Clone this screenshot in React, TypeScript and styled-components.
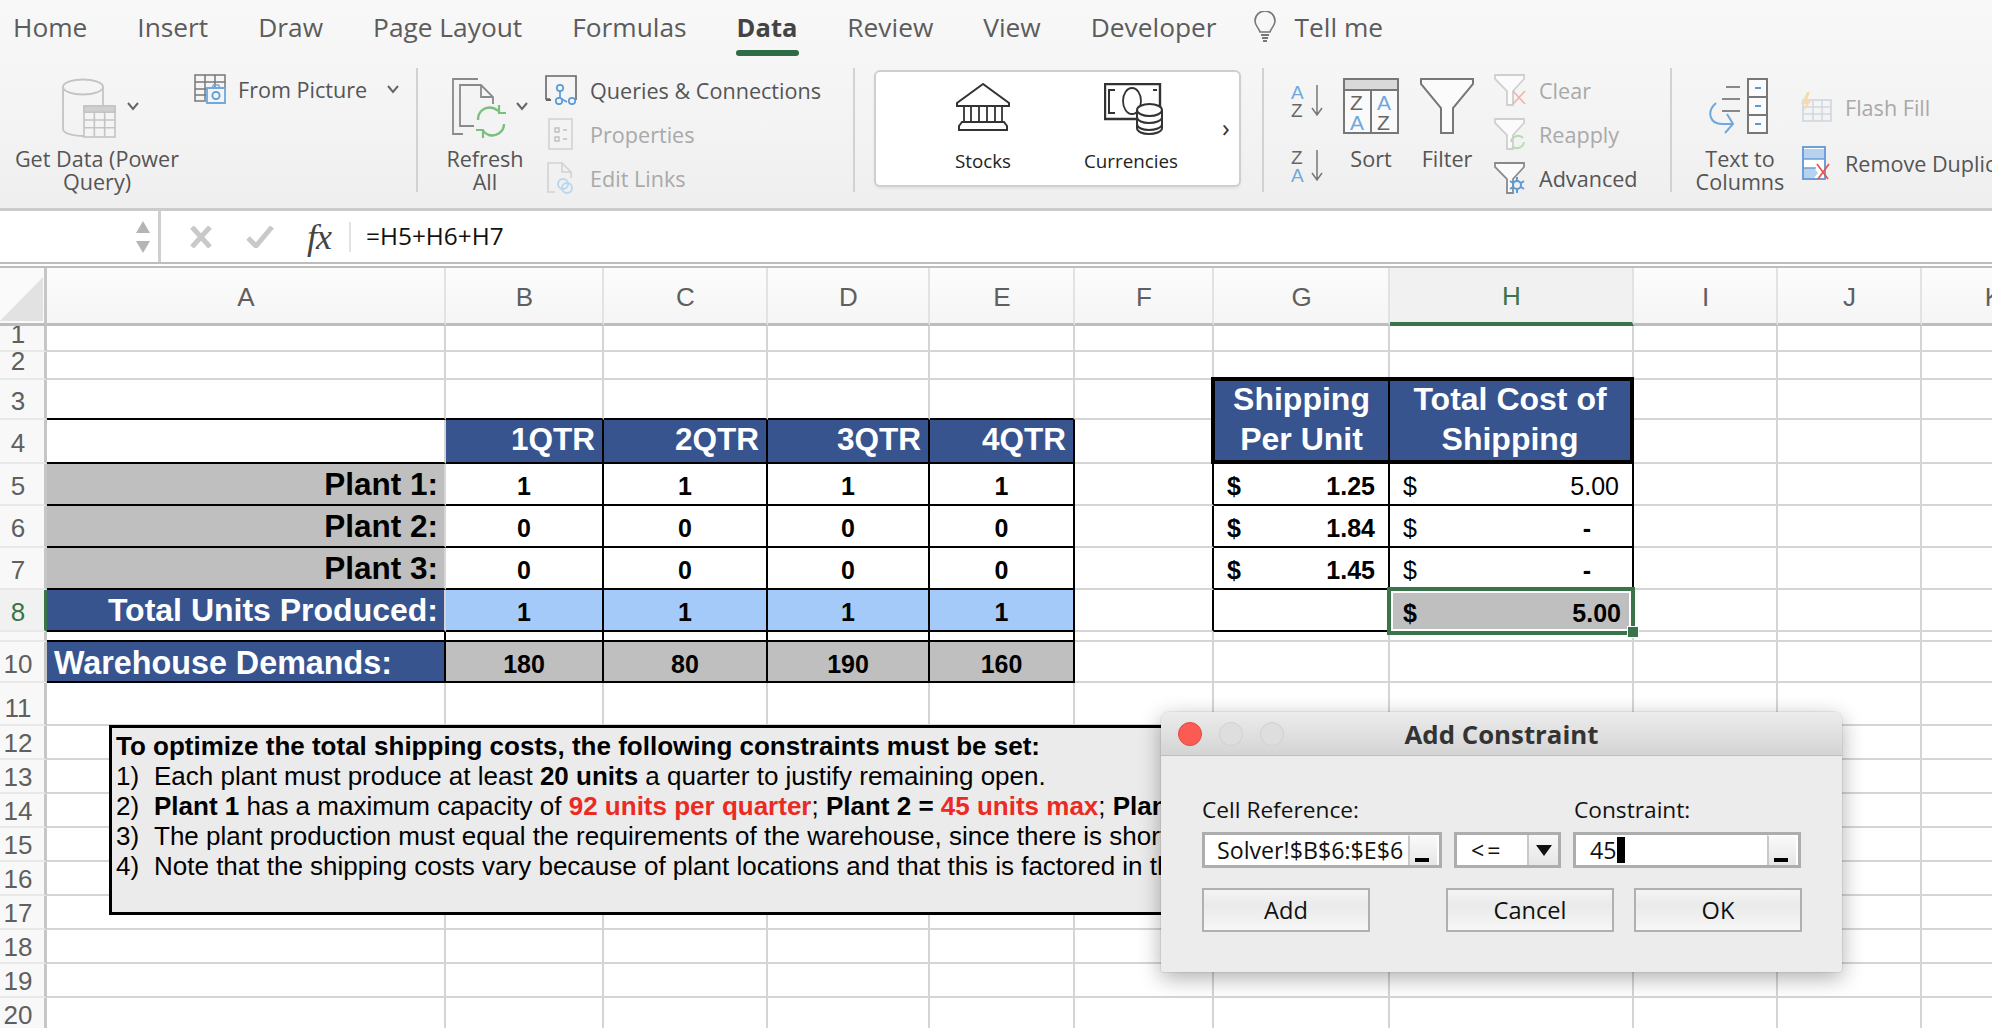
import React from 'react';
import styled, { createGlobalStyle } from 'styled-components';

const GlobalStyle = createGlobalStyle`
  html, body { margin: 0; padding: 0; background: #fff; overflow: hidden; }
  body { width: 1992px; height: 1028px; font-family: "Liberation Sans", Arial, sans-serif; }
  * { box-sizing: border-box; }
`;

const Page = styled.div`width: 1992px; height: 1028px; overflow: hidden; display: flex; flex-direction: column;`;

/* ---------- ribbon ---------- */
const Ribbon = styled.header`
  height: 211px; flex: none; border-bottom: 3px solid #cbcbcb;
  background: linear-gradient(#f8f8f8, #f5f5f5 40%, #efefef);
  font-family: "Open Sans", sans-serif; color: #555; overflow: hidden;
`;
const Tabs = styled.nav`height: 62px; display: flex; gap: 50px; padding: 9px 0 0 13px; align-items: flex-start;`;
const Tab = styled.div<{ $active?: boolean }>`
  font-size: ${p => (p.$active ? 25.5 : 26.3)}px; line-height: 36px; white-space: nowrap; position: relative;
  font-weight: ${p => (p.$active ? 700 : 400)};
  color: ${p => (p.$active ? '#444' : '#5c5c5c')};
  ${p => p.$active && `&::after { content: ''; position: absolute; left: -1px; right: -2px; top: 41px; height: 6px; border-radius: 3px; background: #2f6b45; }`}
`;
const TellMe = styled(Tab)`display: flex; align-items: center; gap: 19px; margin-left: -13px;`;
const Body = styled.div`display: flex; height: 146px;`;
const Group = styled.section<{ $w: number }>`width: ${p => p.$w}px; flex: none; display: flex; align-items: flex-start;`;
const Sep = styled.div`width: 2px; flex: none; height: 124px; margin-top: 6px; background: #d2d2d2;`;
const Big = styled.div<{ $w: number; $ml?: number }>`
  width: ${p => p.$w}px; margin-left: ${p => p.$ml ?? 0}px; flex: none;
  display: flex; flex-direction: column; padding-top: 16px;
`;
const BigIcon = styled.div<{ $pl?: number; $center?: boolean }>`
  height: 69px; display: flex; align-items: flex-start; position: relative;
  justify-content: ${p => (p.$center ? 'center' : 'flex-start')};
  padding-left: ${p => p.$pl ?? 0}px;
`;
const BigLabel = styled.div`
  font-size: 21.6px; line-height: 23px; text-align: center; color: #555; white-space: nowrap;
`;
const Commands = styled.div<{ $ml?: number; $mt?: number; $row?: number }>`
  margin-left: ${p => p.$ml ?? 0}px; margin-top: ${p => p.$mt ?? 6}px; flex: none;
  display: grid; grid-auto-rows: ${p => p.$row ?? 44}px;
`;
const Command = styled.div<{ $gap?: number; $off?: boolean }>`
  display: flex; align-items: center; gap: ${p => p.$gap ?? 13}px; white-space: nowrap;
  font-size: 21.6px; color: ${p => (p.$off ? '#a9a9a9' : '#555')};
`;
const IconCell = styled.span`width: 32px; flex: none; display: flex; justify-content: center;`;
const Chevron = styled.svg`display: block; flex: none;`;
const Down = ({ x = 0 }: { x?: number }) => (
  <Chevron width="12" height="9" viewBox="0 0 12 9" style={x ? { marginLeft: x } : undefined}>
    <path d="M1 1l5 6 5-6" fill="none" stroke="#666" strokeWidth="2" />
  </Chevron>
);
const BigDown = styled.span<{ $left: number }>`position: absolute; left: ${p => p.$left}px; top: 24px;`;

const Gallery = styled.div`
  margin: 8px 0 0 19px; width: 367px; height: 117px; background: #fff; flex: none;
  border: 2px solid #cfcfcf; border-radius: 6px; display: flex; padding-left: 33px; position: relative;
  box-shadow: 0 2px 3px rgba(0,0,0,.05);
`;
const GalleryItem = styled.div`
  width: 148px; display: flex; flex-direction: column; align-items: center; color: #222;
  font-size: 18.8px; padding-top: 11px;
`;
const GalleryIcon = styled.div<{ $ml?: number }>`
  height: 65px; display: flex; align-items: flex-start; margin-left: ${p => p.$ml ?? 0}px;
`;
const GalleryNext = styled.div`
  align-self: center; margin-left: 17px; font-size: 26px; line-height: 26px; color: #333; margin-top: -3px;
`;
const SortStack = styled.div`
  margin: 22px 0 0 27px; width: 33px; height: 98px; display: flex; flex-direction: column; justify-content: space-between; flex: none;
`;

/* ---------- formula bar ---------- */
const FormulaBar = styled.div`
  height: 57px; flex: none; display: flex; align-items: stretch; background: #fff;
  border-bottom: 6px double #bdbdbd;
`;
const NameBox = styled.div`
  width: 161px; flex: none; border-right: 3px solid #cfcfcf; display: flex; flex-direction: column;
  align-items: flex-end; justify-content: center; gap: 8px; padding-right: 8px;
`;
const FxZone = styled.div`
  width: 190px; flex: none; display: flex; align-items: center; padding-left: 28px; position: relative;
  &::after { content: ''; position: absolute; right: 0; top: 11px; height: 30px; width: 2px; background: #e3e3e3; }
`;
const FxGap = styled.span`width: 33px; flex: none;`;
const Fx = styled.span`
  font-family: "Liberation Serif", serif; font-style: italic; font-size: 36px; color: #444; margin-left: 33px;
  letter-spacing: -1px; line-height: 30px;
`;
const Formula = styled.div`
  font-family: "Open Sans", sans-serif; font-size: 24.4px; color: #111; padding: 0 0 2px 15px;
  display: flex; align-items: center; white-space: nowrap;
`;

/* ---------- sheet ---------- */
const Sheet = styled.main`flex: 1; position: relative; overflow: hidden;`;
const Grid = styled.div<{ $cols: string; $rows: string }>`
  display: grid; grid-template-columns: ${p => p.$cols}; grid-template-rows: ${p => p.$rows}; width: 2066px;
`;
const Corner = styled.div`
  background: #fafafa; border-right: 3px solid #c6c6c6; border-bottom: 3px solid #bdbdbd; padding: 9px 0 0 0;
  display: flex; align-items: flex-start; overflow: hidden;
`;
const ColHead = styled.div<{ $sel?: boolean }>`
  display: flex; align-items: center; justify-content: center; font-size: 26px; padding: 3px 0 0 1px;
  border-right: 2px solid #e2e2e2; border-bottom: ${p => (p.$sel ? '4px solid #39744a' : '3px solid #bdbdbd')};
  color: ${p => (p.$sel ? '#39744a' : '#5f5f5f')};
  background: ${p => (p.$sel ? '#f1f1f1' : 'linear-gradient(#fcfcfc, #f5f5f5)')};
`;
const RowHead = styled.div<{ $sel?: boolean; $pt: number; $pb: number }>`
  display: flex; align-items: center; justify-content: center; overflow: hidden; font-size: 26px; line-height: 24px;
  padding-right: 8px; padding-top: ${p => p.$pt}px; padding-bottom: ${p => p.$pb}px;
  border-bottom: 2px solid #e8e8e8;
  border-right: 3px solid ${p => (p.$sel ? '#39744a' : '#c6c6c6')};
  color: ${p => (p.$sel ? '#39744a' : '#5f5f5f')};
  background: ${p => (p.$sel ? '#f1f1f1' : '#f8f8f8')};
`;
const Cell = styled.div<{
  $fill?: string; $ink?: string; $align?: string; $size?: number; $weight?: number;
  $r?: boolean; $b?: boolean; $pl?: number; $pr?: number; $pt?: number; $pb?: number;
}>`
  display: flex; align-items: center; overflow: hidden; white-space: nowrap; min-width: 0;
  justify-content: ${p => p.$align ?? 'center'};
  background: ${p => p.$fill ?? '#fff'}; color: ${p => p.$ink ?? '#000'};
  font-size: ${p => p.$size ?? 25}px; font-weight: ${p => p.$weight ?? 700};
  padding: ${p => p.$pt ?? 5}px ${p => p.$pr ?? 0}px ${p => p.$pb ?? 0}px ${p => p.$pl ?? 0}px;
  border-right: 2px solid ${p => (p.$r ? '#000' : '#d5d5d5')};
  border-bottom: 2px solid ${p => (p.$b ? '#000' : '#d5d5d5')};
`;
const HeaderCell = styled.div<{ $first?: boolean }>`
  grid-row: span 2; margin-top: -3px; z-index: 1;
  margin-left: ${p => (p.$first ? -3 : 0)}px;
  background: #37548f; color: #fff; font-weight: 700; font-size: 32px; line-height: 40px; text-align: center;
  border: 4px solid #000; border-left-width: ${p => (p.$first ? 4 : 0)}px; border-right-width: ${p => (p.$first ? 2 : 4)}px;
  display: flex; align-items: center; justify-content: center; white-space: pre-line; padding-bottom: 4px;
`;
const Selected = styled(Cell)`
  position: relative; z-index: 2; overflow: visible;
  outline: 4px solid #39744a; outline-offset: 0; box-shadow: inset 0 0 0 2px #fff;
  border: 0; margin: 1px 3px 1px 1px; padding: 4px 10px 0 12px;
`;
const Handle = styled.span`
  position: absolute; right: -7px; bottom: -6px; width: 10px; height: 10px; background: #39744a;
  outline: 1px solid #fff;
`;
const Dash = styled.span`margin-right: 28px;`;

const NoteBox = styled.aside`
  position: absolute; left: 109px; top: 457px; width: 1150px; height: 190px;
  background: #ebebeb; border: 3px solid #000; padding: 3px 0 0 4px; overflow: hidden; z-index: 3;
  font-size: 26px; line-height: 30px; color: #000; white-space: nowrap;
`;
const NoteLine = styled.div`display: flex;`;
const NoteNum = styled.span`width: 38px; flex: none;`;
const Hot = styled.b`color: #ec2a24;`;

/* ---------- dialog ---------- */
const Dialog = styled.section`
  position: absolute; left: 1161px; top: 444px; width: 681px; height: 260px; z-index: 5;
  background: #ececec; border-radius: 8px 8px 3px 3px;
  box-shadow: 0 6px 22px rgba(0,0,0,.32), 0 0 0 1px rgba(0,0,0,.06);
  font-family: "Open Sans", sans-serif; color: #111;
`;
const TitleBar = styled.div`
  height: 44px; display: flex; align-items: center; position: relative; padding-left: 17px; gap: 17px;
  background: linear-gradient(#ececec, #d4d4d4); border-bottom: 1px solid #bdbdbd; border-radius: 8px 8px 0 0;
`;
const Light = styled.span<{ $red?: boolean }>`
  width: 24px; height: 24px; border-radius: 50%; flex: none;
  background: ${p => (p.$red ? '#fc5b53' : '#dedede')};
  border: 1px solid ${p => (p.$red ? '#df4a43' : '#d0d0d0')};
`;
const Title = styled.h2`
  position: absolute; left: 0; right: 0; margin: 0; text-align: center; font-size: 25.8px; line-height: 30px;
  font-weight: 700; font-family: "Open Sans", sans-serif; color: #333;
`;
const DialogBody = styled.div`padding: 40px 0 0 41px;`;
const LabelRow = styled.div`display: flex; font-size: 22.7px; line-height: 28px; height: 36px;`;
const LabelA = styled.span`width: 372px;`;
const InputRow = styled.div`display: flex; height: 36px; gap: 12px;`;
const Field = styled.div<{ $w: number }>`
  width: ${p => p.$w}px; border: 3px solid #adadad; background: #fff; display: flex; align-items: center;
  font-size: 23.2px; line-height: 30px; flex: none; padding-left: 12px; position: relative; white-space: nowrap;
`;
const Relation = styled.span`letter-spacing: 3px; padding-left: 2px;`;
const Value = styled.span`padding-left: 2px;`;
const Caret = styled.span`width: 8px; height: 26px; background: #000; flex: none;`;
const RefBtn = styled.span`
  position: absolute; right: 0; top: 0; bottom: 0; width: 31px; border-left: 2px solid #c9c9c9; border-right: 2px solid #fff;
  border-top: 1px solid #fff; background: linear-gradient(#fafafa, #e6e6e6);
  &::after { content: ''; position: absolute; left: 5px; bottom: 3px; width: 14px; height: 4px; background: #000; }
`;
const DropBtn = styled.span`
  position: absolute; right: 0; top: 0; bottom: 0; width: 31px; border-left: 2px solid #c9c9c9;
  background: linear-gradient(#f8f8f8, #e6e6e6);
  display: flex; align-items: center; justify-content: center;
  &::after { content: ''; border: 8px solid transparent; border-top: 11px solid #111; border-bottom: 0; }
`;
const ButtonRow = styled.div`display: flex; margin-top: 20px;`;
const DlgButton = styled.button<{ $ml?: number }>`
  width: 168px; height: 44px; flex: none; margin-left: ${p => p.$ml ?? 0}px; padding: 0;
  border: 2px solid #b0b0b0; background: linear-gradient(#f4f4f4, #eaeaea 40%, #f6f6f6);
  font: 400 23.6px "Open Sans", sans-serif; color: #111;
`;

/* ---------- icons ---------- */
const Bulb = () => (
  <svg width="22" height="32" viewBox="0 0 22 32">
    <path d="M6 21c-1-4-5-6-5-11a10 10 0 0 1 20 0c0 5-4 7-5 11z" fill="none" stroke="#777" strokeWidth="1.6" />
    <path d="M7 24h8M8 27h6M9 30h4" stroke="#777" strokeWidth="2" />
  </svg>
);
const TableMini = ({ x, y, s, c = '#c4c4c4' }: { x: number; y: number; s: number; c?: string }) => (
  <g stroke={c} strokeWidth="1.6" fill="#f4f4f4">
    <rect x={x} y={y} width={s} height={s} />
    <path d={`M${x} ${y + s * .2}h${s}M${x} ${y + s * .45}h${s}M${x} ${y + s * .7}h${s}M${x + s / 3} ${y + s * .2}v${s * .8}M${x + s * 2 / 3} ${y + s * .2}v${s * .8}`} fill="none" />
    <rect x={x} y={y} width={s} height={s * .2} fill="#cfcfcf" />
  </g>
);
const GetData = () => (
  <svg width="54" height="60" viewBox="0 0 54 60">
    <path d="M1 9v42c0 4 9 7 21 7" fill="none" stroke="#c4c4c4" strokeWidth="1.8" />
    <path d="M41 9v18" stroke="#c4c4c4" strokeWidth="1.8" />
    <ellipse cx="21" cy="9" rx="20" ry="7.5" fill="none" stroke="#c4c4c4" strokeWidth="1.8" />
    <TableMini x={22} y={28} s={31} />
  </svg>
);
const FromPic = () => (
  <svg width="32" height="30" viewBox="0 0 32 30">
    <path d="M12 27H1V1h30v14M1 8h30M1 15h19M1 21h11M11 1v25M21 1v13" fill="none" stroke="#777" strokeWidth="1.5" />
    <path d="M13 14h18v15H13z" fill="#f4f4f4" stroke="#6fa8dc" strokeWidth="1.8" />
    <circle cx="22" cy="21.5" r="3.6" fill="none" stroke="#5b9bd5" strokeWidth="1.8" />
    <path d="M18 14l1.5-3h5l1.5 3" fill="none" stroke="#6fa8dc" strokeWidth="1.5" />
  </svg>
);
const Refresh = () => (
  <svg width="56" height="60" viewBox="0 0 56 60">
    <path d="M26 1H1v55h10" fill="none" stroke="#8a8a8a" strokeWidth="1.8" />
    <path d="M24 48H8V7h21l12 12v7M29 7v12h12" fill="none" stroke="#8a8a8a" strokeWidth="1.8" />
    <rect x="22" y="27" width="34" height="33" fill="#f3f3f3" />
    <path d="M26 42c0-9 7-14 15-12 2 .5 4 2 5 3M52 46c0 8-8 13-15 11-3-1-5-3-6-4" fill="none" stroke="#79c07f" strokeWidth="2.4" />
    <path d="M47 27v8h7M31 60v-8h-7" fill="none" stroke="#79c07f" strokeWidth="2.2" />
  </svg>
);
const Queries = () => (
  <svg width="32" height="30" viewBox="0 0 32 30">
    <path d="M5 24H1V1h30v24" fill="none" stroke="#666" strokeWidth="1.6" />
    <path d="M1 25h5" stroke="#666" strokeWidth="2" />
    <g fill="#f4f4f4" stroke="#5b9bd5" strokeWidth="1.7">
      <path d="M15 15v8l7 4" fill="none" /><circle cx="15" cy="13" r="3.2" /><circle cx="14" cy="26" r="3.2" /><circle cx="27" cy="26" r="3.2" />
    </g>
  </svg>
);
const Props = () => (
  <svg width="26" height="32" viewBox="0 0 26 32">
    <rect x="1" y="1" width="23" height="30" fill="none" stroke="#d4d4d4" strokeWidth="1.7" />
    <path d="M7 10h4v4H7zM7 19h4v4H7zM15 12h4M15 21h4" fill="none" stroke="#c0c0c0" strokeWidth="1.4" />
  </svg>
);
const EditLinks = () => (
  <svg width="28" height="32" viewBox="0 0 28 32">
    <path d="M8 30H1V1h14l9 9v6M15 1v9h9" fill="none" stroke="#d2d2d2" strokeWidth="1.6" />
    <circle cx="16" cy="22" r="5" fill="none" stroke="#b9d7ef" strokeWidth="2" />
    <circle cx="20" cy="26" r="5" fill="none" stroke="#b9d7ef" strokeWidth="2" />
  </svg>
);
const Stocks = () => (
  <svg width="56" height="48" viewBox="0 0 56 48">
    <path d="M28 1L2 20v3h52v-3z" fill="none" stroke="#333" strokeWidth="2" />
    <path d="M9 23v16M16 23v16M24 23v16M32 23v16M40 23v16M47 23v16" stroke="#333" strokeWidth="1.8" />
    <path d="M7 39h42l3 4v4H4v-4z" fill="none" stroke="#333" strokeWidth="2" />
  </svg>
);
const Currencies = () => (
  <svg width="60" height="52" viewBox="0 0 60 52">
    <path d="M1 1h55v35H1z" fill="none" stroke="#333" strokeWidth="2.4" />
    <path d="M11 7H5v23h6M49 7h4" fill="none" stroke="#333" strokeWidth="2" />
    <ellipse cx="28" cy="18" rx="9" ry="13" fill="none" stroke="#333" strokeWidth="1.8" />
    <path d="M33 27v18c0 4 6 6 12 6s13-2 13-6V27" fill="#fff" stroke="#333" strokeWidth="2" />
    <ellipse cx="45.5" cy="27" rx="12.5" ry="6" fill="#fff" stroke="#333" strokeWidth="2" />
    <path d="M33 34c0 4 6 6 12 6s13-2 13-6M33 41c0 4 6 6 12 6s13-2 13-6" fill="none" stroke="#333" strokeWidth="2" />
  </svg>
);
const AZ = ({ flip }: { flip?: boolean }) => (
  <svg width="33" height="33" viewBox="0 0 33 33" fontFamily="Liberation Sans, sans-serif" fontSize="19">
    <text x="0" y="15" fill={flip ? '#666' : '#6fa8dc'}>{flip ? 'Z' : 'A'}</text>
    <text x="0" y="33" fill={flip ? '#6fa8dc' : '#666'}>{flip ? 'A' : 'Z'}</text>
    <path d="M26 1v30M21 24l5 7 5-7" fill="none" stroke="#777" strokeWidth="1.5" />
  </svg>
);
const SortIcon = () => (
  <svg width="56" height="56" viewBox="0 0 56 56" fontFamily="Liberation Sans, sans-serif" fontSize="21">
    <rect x="1" y="1" width="54" height="54" fill="#fafafa" stroke="#777" strokeWidth="2" />
    <rect x="1" y="1" width="54" height="11" fill="#d9d9d9" stroke="#777" strokeWidth="2" />
    <path d="M28 12v43" stroke="#777" strokeWidth="2" />
    <text x="7" y="32" fill="#666">Z</text><text x="7" y="52" fill="#6fa8dc">A</text>
    <text x="34" y="32" fill="#6fa8dc">A</text><text x="34" y="52" fill="#666">Z</text>
  </svg>
);
const FilterIcon = () => (
  <svg width="54" height="56" viewBox="0 0 54 56">
    <path d="M1 1h52v5L33 30v25H21V30L1 6z" fill="#fbfbfb" stroke="#777" strokeWidth="2" />
  </svg>
);
const FilterSmall = ({ mark, c = '#cfcfcf' }: { mark: 'x' | 'r' | 'g'; c?: string }) => (
  <svg width="33" height="32" viewBox="0 0 33 32">
    <path d="M1 1h29v4L19 17v14h-6V17L1 5z" fill="#fbfbfb" stroke={c} strokeWidth="1.8" />
    {mark === 'x' && <path d="M19 17l12 13M31 17L19 30" stroke="#f0b4b0" strokeWidth="1.7" />}
    {mark === 'r' && <path d="M17 24a7 7 0 0 1 12-4M30 24a7 7 0 0 1-12 4" fill="none" stroke="#b5dcb8" strokeWidth="2" />}
    {mark === 'g' && <g fill="none" stroke="#5b9bd5" strokeWidth="2"><circle cx="23" cy="23" r="4" /><path d="M23 15v4M23 27v4M16 19l3 2M27 25l3 2M16 27l3-2M27 21l3-2" /></g>}
  </svg>
);
const TextCols = () => (
  <svg width="60" height="56" viewBox="0 0 60 56">
    <path d="M18 9h14M14 21h18M14 33h18" stroke="#888" strokeWidth="2" />
    <rect x="40" y="1" width="19" height="54" fill="#fbfbfb" stroke="#777" strokeWidth="2" />
    <path d="M40 19h19M40 37h19" stroke="#777" strokeWidth="2" />
    <path d="M47 10h6M47 28h6M47 46h6" stroke="#5b9bd5" strokeWidth="2" />
    <path d="M8 25C-2 34 2 46 14 46h10M19 36l6 10-8 9" fill="none" stroke="#6fa8dc" strokeWidth="2" />
  </svg>
);
const FlashFill = () => (
  <svg width="32" height="30" viewBox="0 0 32 30">
    <rect x="3" y="8" width="28" height="21" fill="none" stroke="#cfd7de" strokeWidth="1.6" />
    <path d="M3 15h28M3 22h28M13 8v21M22 8v21" stroke="#cfd7de" strokeWidth="1.5" />
    <path d="M7 0L1 12h5l-3 8 9-12H7l3-8z" fill="#f4dcb2" />
  </svg>
);
const RemoveDup = () => (
  <svg width="28" height="34" viewBox="0 0 28 34">
    <rect x="1" y="1" width="22" height="32" fill="#fff" stroke="#6f9fd8" strokeWidth="2" />
    <rect x="2" y="3" width="20" height="10" fill="#b6d2ef" />
    <path d="M2 22h10l4 5-4 5H2z" fill="#b6d2ef" />
    <path d="M1 13h22M1 22h13" stroke="#6f9fd8" strokeWidth="1.6" />
    <path d="M15 18l11 15M27 18L16 33" stroke="#e4554c" strokeWidth="1.7" />
  </svg>
);
const X = () => (
  <svg width="24" height="22" viewBox="0 0 24 22"><path d="M3 1l18 20M21 1L3 21" stroke="#c9c9c9" strokeWidth="5" /></svg>
);
const Check = () => (
  <svg width="28" height="22" viewBox="0 0 28 22"><path d="M2 12l8 8L26 1" fill="none" stroke="#c9c9c9" strokeWidth="5" /></svg>
);
const Tri = ({ up }: { up?: boolean }) => (
  <svg width="14" height="12" viewBox="0 0 14 12"><path d={up ? 'M7 0l7 12H0z' : 'M0 0h14L7 12z'} fill="#b5b5b5" /></svg>
);
const CornerTri = () => (
  <svg width="43" height="44" viewBox="0 0 43 44"><path d="M43 0v44H0z" fill="#e2e2e2" /></svg>
);

/* ---------- data ---------- */
const columns = [
  ['A', 399], ['B', 158], ['C', 164], ['D', 162], ['E', 145], ['F', 139], ['G', 176], ['H', 244], ['I', 144], ['J', 144], ['K', 144],
] as const;
const rowHeights: Record<number, number> = {
  1: 26, 2: 28, 3: 40, 4: 44, 5: 42, 6: 42, 7: 42, 8: 42, 9: 10, 10: 41, 11: 43,
  12: 34, 13: 34, 14: 34, 15: 34, 16: 34, 17: 34, 18: 34, 19: 34, 20: 34, 21: 34,
};
const rows = Object.keys(rowHeights).map(Number);
const headTop = (r: number) => (r < 3 ? 0 : r === 10 ? 5 : r === 11 ? 8 : r >= 12 ? 1 : 3);
const navy = '#37548f', grey = '#bfbfbf', sky = '#a3caf8';

type Spec = React.ComponentProps<typeof Cell> & { text?: React.ReactNode };
const spec: Record<string, Spec> = {};
const put = (k: string, s: Spec) => { spec[k] = { ...spec[k], ...s }; };

'ABCDE'.split('').forEach(c => { put(`${c}3`, { $b: true }); put(`${c}4`, { $b: true }); put(`${c}9`, { $b: true }); put(`${c}10`, { $b: true }); put(`${c}8`, { $b: true }); });
put('A9', { $r: true }); put('A10', { $r: true });
const qtr: Record<string, string> = { B: '1QTR', C: '2QTR', D: '3QTR', E: '4QTR' };
const demand: Record<string, string> = { B: '180', C: '80', D: '190', E: '160' };
'BCDE'.split('').forEach(c => {
  put(`${c}4`, { $fill: navy, $ink: '#fff', text: qtr[c], $align: 'flex-end', $pr: 7, $size: 31.5, $pt: 0, $pb: 3, $r: true });
  put(`${c}5`, { text: '1', $r: true, $b: true });
  put(`${c}6`, { text: '0', $r: true, $b: true });
  put(`${c}7`, { text: '0', $r: true, $b: true });
  put(`${c}8`, { text: '1', $fill: sky, $r: true });
  put(`${c}9`, { $r: true });
  put(`${c}10`, { text: demand[c], $fill: grey, $r: true });
});
[5, 6, 7].forEach(n => put(`A${n}`, { text: `Plant ${n - 4}:`, $fill: grey, $align: 'flex-end', $pr: 6, $size: 31.5, $pt: 0, $b: true }));
put('A8', { text: 'Total Units Produced:', $fill: navy, $ink: '#fff', $align: 'flex-end', $pr: 6, $size: 32, $pt: 0 });
put('A10', { text: 'Warehouse Demands:', $fill: navy, $ink: '#fff', $align: 'flex-start', $pl: 7, $size: 32.3, $pt: 3 });
[5, 6, 7, 8].forEach(n => {
  put(`F${n}`, { $r: true });
  put(`G${n}`, { $r: true, $b: true, $align: 'space-between', $pl: 13, $pr: 13 });
});
put('G5', { text: <><span>$</span><span>1.25</span></> });
put('G6', { text: <><span>$</span><span>1.84</span></> });
put('G7', { text: <><span>$</span><span>1.45</span></> });
const hCell: Spec = { $r: true, $b: true, $align: 'space-between', $pl: 13, $pr: 13, $weight: 400 };
put('H5', { ...hCell, text: <><span>$</span><span>5.00</span></> });
put('H6', { ...hCell, text: <><span>$</span><Dash><b>-</b></Dash></> });
put('H7', { ...hCell, text: <><span>$</span><Dash><b>-</b></Dash></> });

export default function App() {
  const cols = `47px ${columns.map(c => `${c[1]}px`).join(' ')}`;
  const rowT = `58px ${rows.map(r => `${rowHeights[r]}px`).join(' ')}`;
  return (
    <Page>
      <GlobalStyle />
      <Ribbon>
        <Tabs>
          {['Home', 'Insert', 'Draw', 'Page Layout', 'Formulas'].map(t => <Tab key={t}>{t}</Tab>)}
          <Tab $active>Data</Tab>
          {['Review', 'View', 'Developer'].map(t => <Tab key={t}>{t}</Tab>)}
          <TellMe><Bulb />Tell me</TellMe>
        </Tabs>
        <Body>
          <Group $w={416}>
            <Big $w={194}>
              <BigIcon $pl={62}><GetData /><BigDown $left={127}><Down /></BigDown></BigIcon>
              <BigLabel>Get Data (Power<br />Query)</BigLabel>
            </Big>
            <Commands $row={40} $mt={7}>
              <Command $gap={12}><IconCell><FromPic /></IconCell>From Picture<Down x={8} /></Command>
            </Commands>
          </Group>
          <Sep />
          <Group $w={435}>
            <Big $w={120} $ml={7}>
              <BigIcon $pl={27}><Refresh /><BigDown $left={91}><Down /></BigDown></BigIcon>
              <BigLabel>Refresh<br />All</BigLabel>
            </Big>
            <Commands>
              <Command><IconCell><Queries /></IconCell>Queries &amp; Connections</Command>
              <Command $off><IconCell><Props /></IconCell>Properties</Command>
              <Command $off><IconCell><EditLinks /></IconCell>Edit Links</Command>
            </Commands>
          </Group>
          <Sep />
          <Group $w={407}>
            <Gallery>
              <GalleryItem><GalleryIcon><Stocks /></GalleryIcon>Stocks</GalleryItem>
              <GalleryItem><GalleryIcon $ml={6}><Currencies /></GalleryIcon>Currencies</GalleryItem>
              <GalleryNext>›</GalleryNext>
            </Gallery>
          </Group>
          <Sep />
          <Group $w={406}>
            <SortStack><AZ /><AZ flip /></SortStack>
            <Big $w={60} $ml={17}>
              <BigIcon $center><SortIcon /></BigIcon>
              <BigLabel>Sort</BigLabel>
            </Big>
            <Big $w={60} $ml={16}>
              <BigIcon $center><FilterIcon /></BigIcon>
              <BigLabel>Filter</BigLabel>
            </Big>
            <Commands $ml={17}>
              <Command $off $gap={12}><FilterSmall mark="x" />Clear</Command>
              <Command $off $gap={12}><FilterSmall mark="r" />Reapply</Command>
              <Command $gap={12}><FilterSmall mark="g" c="#8a8a8a" />Advanced</Command>
            </Commands>
          </Group>
          <Sep />
          <Group $w={320}>
            <Big $w={120} $ml={8}>
              <BigIcon $pl={28}><TextCols /></BigIcon>
              <BigLabel>Text to<br />Columns</BigLabel>
            </Big>
            <Commands $mt={17} $row={56}>
              <Command $off><IconCell><FlashFill /></IconCell>Flash Fill</Command>
              <Command><IconCell><RemoveDup /></IconCell>Remove Duplicates</Command>
            </Commands>
          </Group>
        </Body>
      </Ribbon>
      <FormulaBar>
        <NameBox><Tri up /><Tri /></NameBox>
        <FxZone><X /><FxGap /><Check /><Fx>fx</Fx></FxZone>
        <Formula>=H5+H6+H7</Formula>
      </FormulaBar>
      <Sheet>
        <Grid $cols={cols} $rows={rowT}>
          <Corner><CornerTri /></Corner>
          {columns.map(([c]) => <ColHead key={c} $sel={c === 'H'}>{c}</ColHead>)}
          {rows.map(r => (
            <React.Fragment key={r}>
              <RowHead $sel={r === 8} $pt={headTop(r)} $pb={r < 3 ? 8 : 0}>{r === 9 || r === 21 ? '' : r}</RowHead>
              {columns.map(([c]) => {
                const key = `${c}${r}`;
                if (key === 'G3') return <HeaderCell key={key} $first>{'Shipping\nPer Unit'}</HeaderCell>;
                if (key === 'H3') return <HeaderCell key={key}>{'Total Cost of\nShipping'}</HeaderCell>;
                if (key === 'G4' || key === 'H4') return null;
                if (key === 'H8') {
                  return (
                    <Selected key={key} $fill={grey} $align="space-between">
                      <span>$</span><span>5.00</span><Handle />
                    </Selected>
                  );
                }
                const { text, ...rest } = spec[key] ?? {};
                return <Cell key={key} {...rest}>{text}</Cell>;
              })}
            </React.Fragment>
          ))}
        </Grid>
        <NoteBox>
          <NoteLine><b>To optimize the total shipping costs, the following constraints must be set:</b></NoteLine>
          <NoteLine><NoteNum>1)</NoteNum><span>Each plant must produce at least <b>20 units</b> a quarter to justify remaining open.</span></NoteLine>
          <NoteLine><NoteNum>2)</NoteNum><span><b>Plant 1</b> has a maximum capacity of <Hot>92 units per quarter</Hot>; <b>Plant 2 = </b><Hot>45 units max</Hot>; <b>Plant</b></span></NoteLine>
          <NoteLine><NoteNum>3)</NoteNum><span>The plant production must equal the requirements of the warehouse, since there is short</span></NoteLine>
          <NoteLine><NoteNum>4)</NoteNum><span>Note that the shipping costs vary because of plant locations and that this is factored in the</span></NoteLine>
        </NoteBox>
        <Dialog>
          <TitleBar>
            <Title>Add Constraint</Title>
            <Light $red /><Light /><Light />
          </TitleBar>
          <DialogBody>
            <LabelRow><LabelA>Cell Reference:</LabelA><span>Constraint:</span></LabelRow>
            <InputRow>
              <Field $w={240}>Solver!$B$6:$E$6<RefBtn /></Field>
              <Field $w={107}><Relation>&lt;=</Relation><DropBtn /></Field>
              <Field $w={228}><Value>45</Value><Caret /><RefBtn /></Field>
            </InputRow>
            <ButtonRow>
              <DlgButton>Add</DlgButton>
              <DlgButton $ml={76}>Cancel</DlgButton>
              <DlgButton $ml={20}>OK</DlgButton>
            </ButtonRow>
          </DialogBody>
        </Dialog>
      </Sheet>
    </Page>
  );
}
